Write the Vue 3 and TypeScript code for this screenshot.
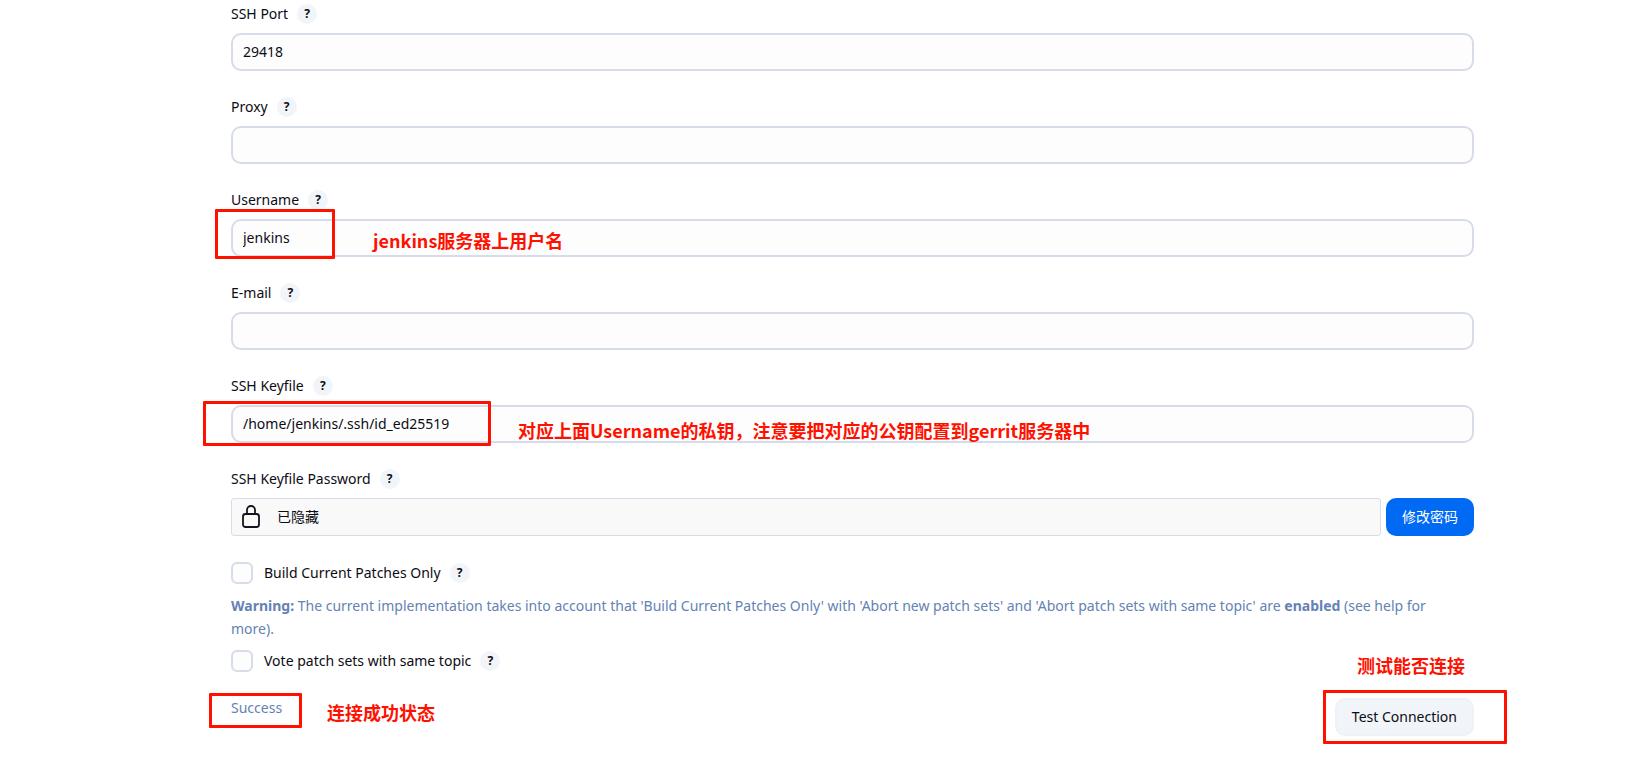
<script setup lang="ts">
import { reactive, ref } from 'vue'

interface Field {
  id: string
  label: string
  value: string
  note?: string
}

const fields = reactive<Field[]>([
  { id: 'ssh-port', label: 'SSH Port', value: '29418' },
  { id: 'proxy', label: 'Proxy', value: '' },
  { id: 'username', label: 'Username', value: 'jenkins', note: 'jenkins服务器上用户名' },
  { id: 'email', label: 'E-mail', value: '' },
  {
    id: 'keyfile',
    label: 'SSH Keyfile',
    value: '/home/jenkins/.ssh/id_ed25519',
    note: '对应上面Username的私钥，注意要把对应的公钥配置到gerrit服务器中',
  },
])

const currentOnly = ref(false)
const voteSameTopic = ref(false)
</script>

<template>
  <main class="page">
    <form class="form" @submit.prevent>
      <div v-for="f in fields" :key="f.id" class="field">
        <div class="caption">
          <label :for="f.id">{{ f.label }}</label>
          <button type="button" class="help" :aria-label="'Help for ' + f.label"><span>?</span></button>
        </div>
        <div class="control">
          <input :id="f.id" v-model="f.value" class="text" type="text" spellcheck="false" />
          <template v-if="f.note">
            <div class="frame" :class="'frame-' + f.id"></div>
            <div class="note" :class="'note-' + f.id">{{ f.note }}</div>
          </template>
        </div>
      </div>

      <div class="field password-field">
        <div class="caption">
          <span>SSH Keyfile Password</span>
          <button type="button" class="help" aria-label="Help for SSH Keyfile Password"><span>?</span></button>
        </div>
        <div class="password">
          <div class="concealed">
            <svg class="lock" viewBox="0 0 18 24" aria-hidden="true">
              <rect x="1" y="9" width="16" height="13" rx="2.5" />
              <path d="M5 9V5a4 4 0 0 1 8 0V9" />
            </svg>
            <span>已隐藏</span>
          </div>
          <button type="button" class="primary">修改密码</button>
        </div>
      </div>

      <div class="check">
        <input id="current-only" v-model="currentOnly" type="checkbox" />
        <label for="current-only">Build Current Patches Only</label>
        <button type="button" class="help" aria-label="Help for Build Current Patches Only"><span>?</span></button>
      </div>
      <p class="warning">
        <strong>Warning:</strong> The current implementation takes into account that 'Build Current Patches Only' with
        'Abort new patch sets' and 'Abort patch sets with same topic' are <strong>enabled</strong> (see help for more).
      </p>
      <div class="check">
        <input id="vote-topic" v-model="voteSameTopic" type="checkbox" />
        <label for="vote-topic">Vote patch sets with same topic</label>
        <button type="button" class="help" aria-label="Help for Vote patch sets with same topic"><span>?</span></button>
      </div>

      <div class="footer">
        <div class="status">
          Success
          <div class="frame frame-status"></div>
          <div class="note note-status">连接成功状态</div>
        </div>
        <div class="control">
          <button type="button" class="test">Test Connection</button>
          <div class="frame frame-test"></div>
          <div class="note note-test">测试能否连接</div>
        </div>
      </div>
    </form>
  </main>
</template>

<style>
body {
  margin: 0;
  background: #fff;
}
</style>

<style scoped>
.page {
  padding: 3px 156px 24px 231px;
  font-family: "Noto Sans", "Noto Sans CJK SC", sans-serif;
  font-size: 14px;
  line-height: 22px;
  color: #0c0c14;
}
button,
input {
  font: inherit;
  color: inherit;
  margin: 0;
  box-sizing: border-box;
}
.field {
  margin-bottom: 25px;
}
.password-field {
  margin-bottom: 26px;
}
.caption {
  display: flex;
  align-items: center;
  gap: 9px;
  height: 22px;
  margin-bottom: 8px;
}
.help {
  display: flex;
  align-items: center;
  justify-content: center;
  width: 20px;
  height: 20px;
  padding: 0;
  border: 0;
  border-radius: 50%;
  background: #f1f4f9;
  font-size: 12px;
  font-weight: 700;
  line-height: 20px;
}
.control {
  position: relative;
}
.text {
  display: block;
  width: 100%;
  height: 38px;
  padding: 0 10px 2px;
  border: 2px solid #d6dcea;
  border-radius: 10px;
  background: #fdfdfd;
  outline: none;
}
.password {
  display: flex;
  gap: 5px;
}
.concealed {
  flex: 1;
  display: flex;
  align-items: center;
  gap: 17px;
  height: 38px;
  padding: 0 10px;
  box-sizing: border-box;
  border: 1px solid #d6dcea;
  border-radius: 3px;
  background: #f9f9f9;
}
.lock {
  width: 18px;
  height: 24px;
  fill: none;
  stroke: #14141f;
  stroke-width: 1.8;
}
.primary,
.test {
  height: 38px;
  padding: 0 16px;
  border: 0;
  border-radius: 10px;
  white-space: nowrap;
}
.primary {
  background: #006af5;
  color: #fff;
}
.test {
  display: block;
  border: 2px solid #eef2f6;
  padding: 0 15px;
  background: #f1f4f8;
}
.check {
  display: flex;
  align-items: center;
  height: 22px;
}
.check input {
  appearance: none;
  width: 22px;
  height: 22px;
  border: 2px solid #d6dcea;
  border-radius: 6px;
  background: #fdfdfd;
}
.check input:checked {
  background: #006af5;
}
.check label {
  margin: 0 9px 0 11px;
}
.warning {
  margin: 10px 0;
  padding-right: 16px;
  line-height: 23px;
  color: #6482b4;
}
.footer {
  display: flex;
  justify-content: space-between;
  align-items: flex-start;
  margin-top: 26px;
}
.status {
  position: relative;
  line-height: 20px;
  color: #6482b4;
}
.frame {
  position: absolute;
  box-sizing: border-box;
  border: 3px solid #ff1100;
  border-radius: 1px;
  pointer-events: none;
}
.note {
  position: absolute;
  color: #ff1100;
  font-family: "Noto Sans CJK SC", sans-serif;
  font-size: 18px;
  font-weight: 700;
  line-height: 24px;
  white-space: nowrap;
  pointer-events: none;
}
.frame-username {
  left: -16px;
  top: -10px;
  width: 120px;
  height: 50px;
}
.note-username {
  left: 142px;
  top: 9px;
}
.frame-keyfile {
  left: -28px;
  top: -4px;
  width: 288px;
  height: 45px;
}
.note-keyfile {
  left: 287px;
  top: 13px;
}
.frame-status {
  left: -22px;
  top: -5px;
  width: 93px;
  height: 35px;
}
.note-status {
  left: 96px;
  top: 2px;
}
.frame-test {
  right: -33px;
  top: -8px;
  width: 184px;
  height: 54px;
}
.note-test {
  right: 9px;
  top: -45px;
}
</style>
